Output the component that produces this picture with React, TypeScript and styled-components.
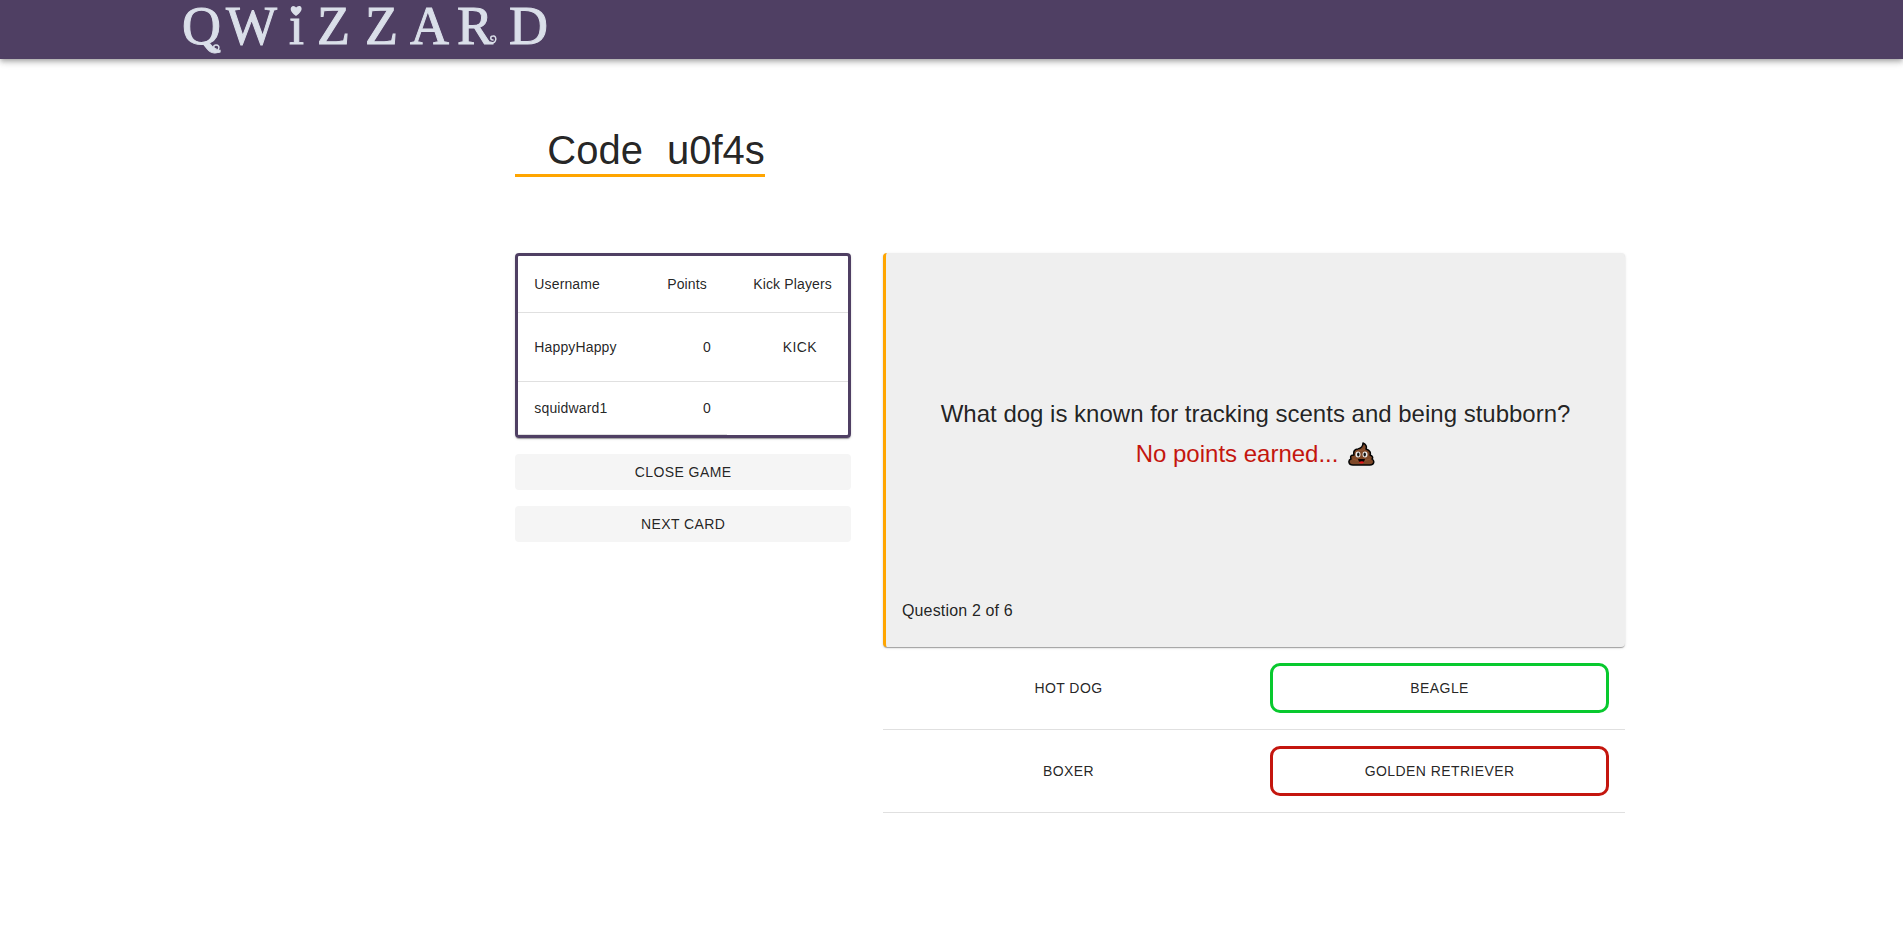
import React from 'react';
import styled, { createGlobalStyle } from 'styled-components';

const GlobalStyle = createGlobalStyle`
  *, *::before, *::after { box-sizing: border-box; }
  body {
    margin: 0;
    background: #fff;
    color: rgba(0, 0, 0, 0.87);
    font-family: Arial, 'Liberation Sans', sans-serif;
    font-size: 14px;
    line-height: 20px;
  }
`;

const Header = styled.header`
  height: 59px;
  padding-left: 9.5%;
  background: #4f3f63;
  box-shadow: 0 2px 4px -1px rgba(0, 0, 0, 0.2), 0 4px 5px rgba(0, 0, 0, 0.14),
    0 1px 10px rgba(0, 0, 0, 0.12);
`;

const LogoLink = styled.a`
  display: block;
  width: 370px;
  height: 59px;
`;

const LogoText = styled.text`
  font-family: 'Liberation Serif', serif;
  font-size: 54px;
  fill: #dadfe9;
  stroke: #dadfe9;
`;

const Main = styled.main`
  padding: 67px 14.6% 64px 27.08%;
`;

const CodeTitle = styled.h1`
  display: inline-flex;
  gap: 24px;
  margin: 0;
  padding-left: 32px;
  border-bottom: 3px solid orange;
  font-size: 40px;
  font-weight: 400;
  line-height: 48px;
`;

const Board = styled.div`
  display: grid;
  grid-template-columns: 336fr 743fr;
  align-items: start;
  gap: 32px;
  margin-top: 76px;
`;

const Sidebar = styled.aside`
  display: flex;
  flex-direction: column;
  gap: 16px;
`;

const PlayersFrame = styled.div`
  overflow: hidden;
  border: 3px solid #4f3f63;
  border-radius: 4px;
  box-shadow: 0 2px 1px -1px rgba(0, 0, 0, 0.2), 0 1px 1px rgba(0, 0, 0, 0.14),
    0 1px 3px rgba(0, 0, 0, 0.12);
`;

const PlayersTable = styled.table`
  width: 100%;
  border-collapse: separate;
  border-spacing: 0;
  table-layout: fixed;
`;

const cellWidths = { name: '40.3%', points: '23%', kick: '36.7%' };

const HeadCell = styled.th<{ $col: keyof typeof cellWidths }>`
  width: ${(p) => cellWidths[p.$col]};
  padding: 16px;
  border-bottom: 1px solid #e0e0e0;
  font-weight: 400;
  line-height: 24px;
  letter-spacing: 0.01em;
  white-space: nowrap;
  text-align: ${(p) => (p.$col === 'kick' ? 'right' : 'left')};
`;

const Cell = styled.td<{ $right?: boolean }>`
  padding: 16px;
  border-bottom: 1px solid #e0e0e0;
  letter-spacing: 0.01em;
  text-align: ${(p) => (p.$right ? 'right' : 'left')};
`;

const BaseButton = styled.button`
  margin: 0;
  border: 0;
  background: transparent;
  color: inherit;
  font-family: inherit;
  font-size: 14px;
  line-height: 24px;
  letter-spacing: 0.03em;
  text-transform: uppercase;
  cursor: pointer;
`;

const KickButton = styled(BaseButton)`
  min-width: 64px;
  padding: 6px 8px;
`;

const ActionButton = styled(BaseButton)`
  padding: 6px 16px;
  border-radius: 4px;
  background: #f5f5f5;
`;

const QuestionCard = styled.section`
  display: grid;
  grid-template-rows: 1fr auto;
  min-height: 394px;
  padding: 24px 16px;
  border-left: 3px solid orange;
  border-radius: 4px;
  background: #efefef;
  box-shadow: 0 2px 1px -1px rgba(0, 0, 0, 0.2), 0 1px 1px rgba(0, 0, 0, 0.14),
    0 1px 3px rgba(0, 0, 0, 0.12);
`;

const QuestionBody = styled.div`
  display: flex;
  flex-direction: column;
  justify-content: center;
  padding-bottom: 8px;
  text-align: center;
  font-size: 24px;
  line-height: 40px;
`;

const Question = styled.h2`
  margin: 0;
  font-size: inherit;
  font-weight: 400;
`;

const Result = styled.p`
  display: flex;
  align-items: center;
  justify-content: center;
  gap: 10px;
  margin: 0;
  color: #c4160e;
`;

const Progress = styled.p`
  margin: 0;
  font-size: 16px;
  line-height: 24px;
  letter-spacing: 0.01em;
`;

const AnswerRow = styled.div`
  display: grid;
  grid-template-columns: 1fr 1fr;
  gap: 32px;
  padding: 16px;
  border-bottom: 1px solid #e0e0e0;
`;

const outline = { none: 'transparent', correct: '#08c92e', wrong: '#c4160e' };

const AnswerButton = styled(BaseButton)<{ $state: keyof typeof outline }>`
  padding: 10px 8px;
  border: 3px solid ${(p) => outline[p.$state]};
  border-radius: 10px;
`;

const Logo = () => (
  <svg width="370" height="59" viewBox="0 0 370 59" role="img" aria-label="Qwizzard">
    <LogoText x="1 45 108 136 184 229 276 328" y="44">QWiZZARD</LogoText>
    <path d="M115 16c-7-5-6-9-3-10 2 0 3 1 3 2 1-2 3-2 4-2 3 2 2 6-4 10z" fill="#dadfe9" />
    <path
      d="M33 51c5 1 7-6 2-6-3 0-3 4 0 4M310 43c6 1 6-8 2-7-3 0-3 4 0 4"
      fill="none"
      stroke="#dadfe9"
      strokeWidth="1.500"
      strokeLinecap="round"
    />
  </svg>
);

const PoopIcon = () => (
  <svg width="27" height="24" viewBox="0 0 27 24" role="img" aria-label="poop">
    <path
      d="M15 1c3 1 4 4 3 6 4 1 5 4 4 6 3 1 3 3 2 4 3 2 2 6-2 6H5c-5 0-5-5-2-6-1-3 0-4 3-4-1-4 1-6 4-6 4-1 5-3 5-6z"
      fill="#7f4828"
      stroke="#050505"
      strokeWidth="1.500"
      strokeLinejoin="round"
    />
    <path d="M10 8c3 1 5 0 7-1M5 17c4 2 13 2 17 0" fill="none" stroke="#935735" />
    <ellipse cx="10" cy="12.500" rx="2.500" ry="3" fill="#eee" />
    <ellipse cx="17" cy="12.500" rx="2.500" ry="3" fill="#eee" />
    <ellipse cx="10.300" cy="12.500" rx="1.200" ry="2" fill="#111" />
    <ellipse cx="16.700" cy="12.500" rx="1.200" ry="2" fill="#111" />
    <path d="M10 17h7c-1 5-6 5-7 0z" fill="#090000" />
    <path d="M11 20c2-1 4-1 5 0-1 2-4 2-5 0z" fill="#e9151b" />
  </svg>
);

type Player = { name: string; points: number; kickable: boolean };
type Answer = { label: string; state: keyof typeof outline };

const players: Player[] = [
  { name: 'HappyHappy', points: 0, kickable: true },
  { name: 'squidward1', points: 0, kickable: false },
];

const answerRows: Answer[][] = [
  [{ label: 'Hot Dog', state: 'none' }, { label: 'Beagle', state: 'correct' }],
  [{ label: 'Boxer', state: 'none' }, { label: 'Golden Retriever', state: 'wrong' }],
];

export default function App() {
  return (
    <>
      <GlobalStyle />
      <Header>
        <LogoLink href="#"><Logo /></LogoLink>
      </Header>
      <Main>
        <CodeTitle><span>Code</span><span>u0f4s</span></CodeTitle>
        <Board>
          <Sidebar>
            <PlayersFrame>
              <PlayersTable>
                <thead>
                  <tr>
                    <HeadCell $col="name">Username</HeadCell>
                    <HeadCell $col="points">Points</HeadCell>
                    <HeadCell $col="kick">Kick Players</HeadCell>
                  </tr>
                </thead>
                <tbody>
                  {players.map((player) => (
                    <tr key={player.name}>
                      <Cell>{player.name}</Cell>
                      <Cell $right>{player.points}</Cell>
                      {player.kickable && (
                        <Cell $right><KickButton type="button">Kick</KickButton></Cell>
                      )}
                    </tr>
                  ))}
                </tbody>
              </PlayersTable>
            </PlayersFrame>
            <ActionButton type="button">Close Game</ActionButton>
            <ActionButton type="button">Next Card</ActionButton>
          </Sidebar>
          <div>
            <QuestionCard>
              <QuestionBody>
                <Question>What dog is known for tracking scents and being stubborn?</Question>
                <Result>No points earned... <PoopIcon /></Result>
              </QuestionBody>
              <Progress>Question 2 of 6</Progress>
            </QuestionCard>
            {answerRows.map((row) => (
              <AnswerRow key={row[0].label}>
                {row.map((answer) => (
                  <AnswerButton key={answer.label} type="button" $state={answer.state}>
                    {answer.label}
                  </AnswerButton>
                ))}
              </AnswerRow>
            ))}
          </div>
        </Board>
      </Main>
    </>
  );
}
